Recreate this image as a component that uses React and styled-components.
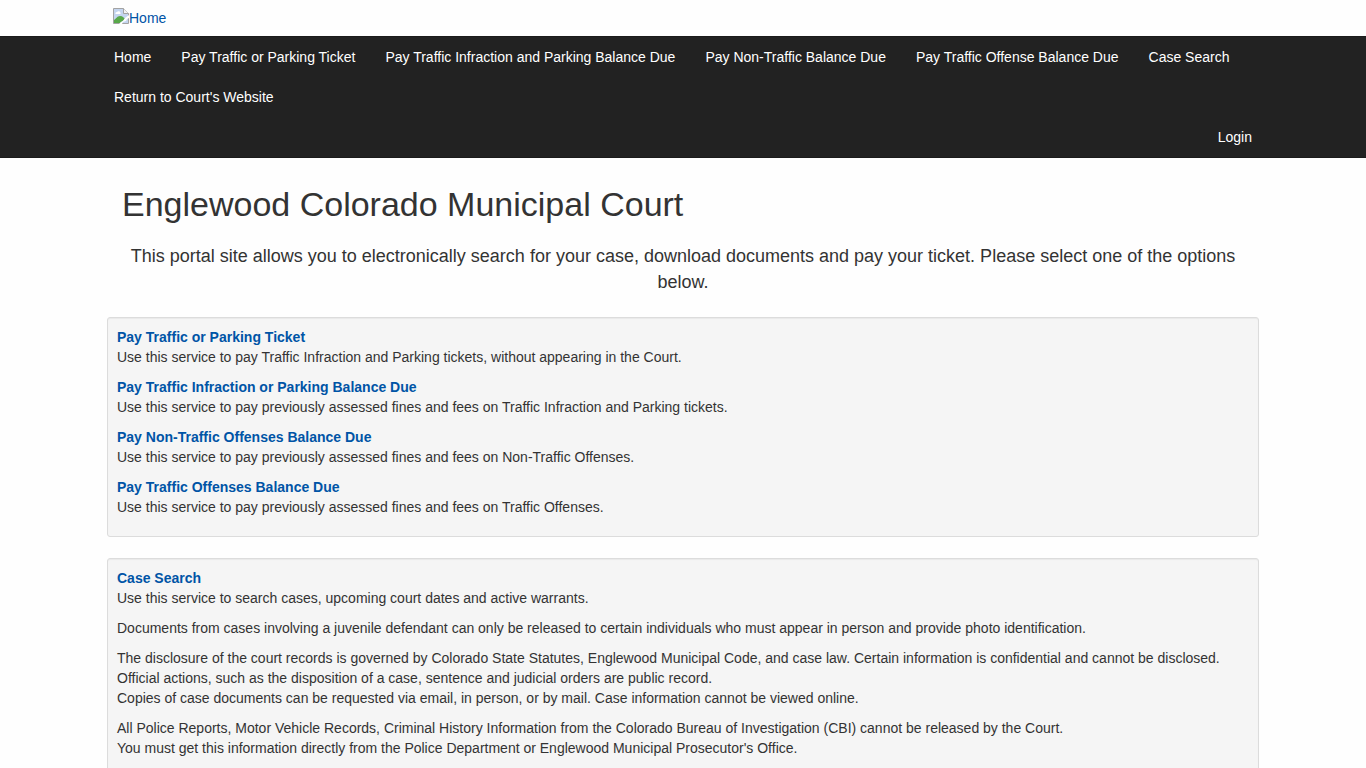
import React from "react"
import styled, { createGlobalStyle } from "styled-components"

const GlobalStyle = createGlobalStyle`
  * {
    box-sizing: border-box;
  }
  body {
    margin: 0;
    background-color: #fefefe;
    color: #333;
    font-family: "Liberation Sans", Arial, sans-serif;
    font-size: 14px;
    line-height: 20px;
  }
  a {
    color: #0054a6;
    text-decoration: none;
  }
`

const Container = styled.div`
  max-width: 1168px;
  margin: 0 auto;
`

const Brand = styled.header`
  padding: 8px 14px;
  a {
    display: inline-flex;
    vertical-align: top;
  }
`

const Navbar = styled.nav`
  background-color: #222;
  border: solid #1b1b1b;
  border-width: 1px 0;
`

const Menu = styled.ul`
  display: flex;
  flex-wrap: wrap;
  justify-content: ${props => (props.$right ? "flex-end" : "flex-start")};
  margin: 0;
  padding: 0;
  list-style: none;
`

const MenuLink = styled.a`
  display: block;
  padding: 10px 15px;
  && {
    color: #fff;
  }
`

const Content = styled.main`
  padding: 26px 8px 0;
`

const Title = styled.h1`
  margin: 0 15px;
  font-size: 34px;
  font-weight: 500;
  line-height: 40px;
`

const Lead = styled.p`
  margin: 19px 15px 22px;
  font-size: 18px;
  line-height: 26px;
  text-align: center;
`

const Well = styled.section`
  margin-bottom: 21px;
  padding: 9px;
  background-color: #f5f5f5;
  border: 1px solid #dcdcdc;
  border-radius: 3px;
  box-shadow: inset 0 1px 1px rgba(0, 0, 0, 0.05);
  p {
    margin: 0 0 10px;
  }
`

const ServiceLink = styled.a`
  font-weight: bold;
`

const MissingImage = () => (
  <svg width="16" height="16" viewBox="0 0 16 16" aria-hidden="true">
    <path d="M.5.5h10l5 5v10H.5z" fill="#c4d5ef" stroke="#a3a3a3" />
    <path d="M10.5.5v5h5" fill="#f4f4f4" stroke="#a3a3a3" />
    <path d="M2.5 6a1.5 1.5 0 0 1 1.5-2 2 2 0 0 1 3.500 1v1z" fill="#fff" />
    <path d="M1 15v-3c2-1 3-4 6-4s4 2 5 3l-5 4z" fill="#58a84a" />
    <path d="M6 16l2-2 2-1 2-3 4-3v3l-2 1-1 2-3 1-1 2z" fill="#fefefe" />
  </svg>
)

const menu = [
  "Home",
  "Pay Traffic or Parking Ticket",
  "Pay Traffic Infraction and Parking Balance Due",
  "Pay Non-Traffic Balance Due",
  "Pay Traffic Offense Balance Due",
  "Case Search",
  "Return to Court's Website",
]

const payments = [
  {
    title: "Pay Traffic or Parking Ticket",
    text: "Use this service to pay Traffic Infraction and Parking tickets, without appearing in the Court.",
  },
  {
    title: "Pay Traffic Infraction or Parking Balance Due",
    text: "Use this service to pay previously assessed fines and fees on Traffic Infraction and Parking tickets.",
  },
  {
    title: "Pay Non-Traffic Offenses Balance Due",
    text: "Use this service to pay previously assessed fines and fees on Non-Traffic Offenses.",
  },
  {
    title: "Pay Traffic Offenses Balance Due",
    text: "Use this service to pay previously assessed fines and fees on Traffic Offenses.",
  },
]

const Service = ({ title, text }) => (
  <p>
    <ServiceLink href="#">{title}</ServiceLink>
    <br />
    {text}
  </p>
)

const App = () => (
  <>
    <GlobalStyle />
    <Container>
      <Brand>
        <a href="#">
          <MissingImage />
          Home
        </a>
      </Brand>
    </Container>
    <Navbar>
      <Container>
        <Menu>
          {menu.map(item => (
            <li key={item}>
              <MenuLink href="#">{item}</MenuLink>
            </li>
          ))}
        </Menu>
        <Menu $right>
          <li>
            <MenuLink href="#">Login</MenuLink>
          </li>
        </Menu>
      </Container>
    </Navbar>
    <Container>
      <Content>
        <Title>Englewood Colorado Municipal Court</Title>
        <Lead>
          This portal site allows you to electronically search for your case, download documents
          and pay your ticket. Please select one of the options below.
        </Lead>
        <Well>
          {payments.map(item => (
            <Service key={item.title} {...item} />
          ))}
        </Well>
        <Well>
          <Service
            title="Case Search"
            text="Use this service to search cases, upcoming court dates and active warrants."
          />
          <p>
            Documents from cases involving a juvenile defendant can only be released to certain
            individuals who must appear in person and provide photo identification.
          </p>
          <p>
            The disclosure of the court records is governed by Colorado State Statutes, Englewood
            Municipal Code, and case law. Certain information is confidential and cannot be
            disclosed. Official actions, such as the disposition of a case, sentence and judicial
            orders are public record.
            <br />
            Copies of case documents can be requested via email, in person, or by mail. Case
            information cannot be viewed online.
          </p>
          <p>
            All Police Reports, Motor Vehicle Records, Criminal History Information from the
            Colorado Bureau of Investigation (CBI) cannot be released by the Court.
            <br />
            You must get this information directly from the Police Department or Englewood
            Municipal Prosecutor's Office.
          </p>
        </Well>
      </Content>
    </Container>
  </>
)

export default App
